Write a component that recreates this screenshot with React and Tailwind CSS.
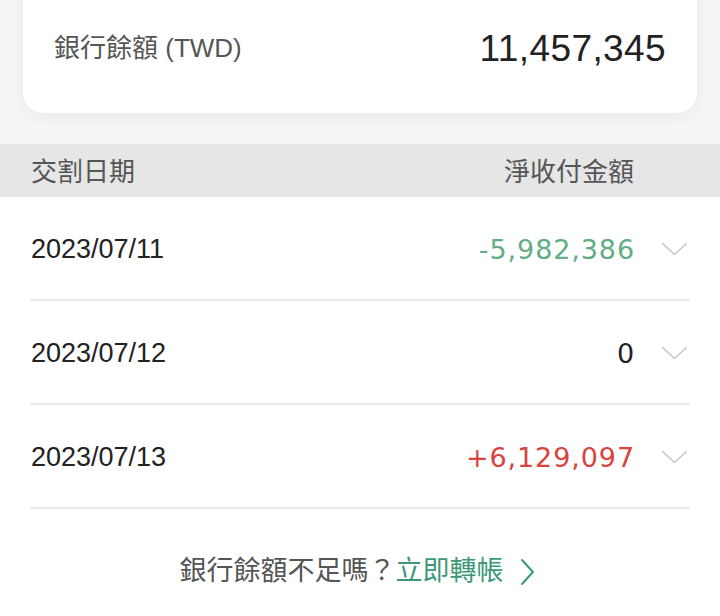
import React from "react";

const FONT = { fontFamily: '"Liberation Sans", "Noto Sans CJK TC", sans-serif' };
const AMT = { fontFamily: '"DejaVu Sans", "Liberation Sans", sans-serif' };

function ChevronDown() {
  return (
    <svg width="27" height="14" viewBox="0 0 27 14" fill="none">
      <polyline points="1.5,1.5 13.5,12.5 25.5,1.5" stroke="#c6c6c6" strokeWidth="1.6" strokeLinecap="round" strokeLinejoin="round" />
    </svg>
  );
}

const rows = [
  { date: "2023/07/11", amount: "-5,982,386", color: "text-[#63ad85]" },
  { date: "2023/07/12", amount: "0", color: "text-[#222222]" },
  { date: "2023/07/13", amount: "+6,129,097", color: "text-[#d8433c]" },
];

export default function App() {
  return (
    <div className="w-[720px] h-[616px] bg-white overflow-hidden flex flex-col" style={FONT}>
      <div className="bg-[#f5f5f5] pb-[31px]">
        <div className="mx-[23px] -mt-[24px] pt-[52px] pb-[45px] px-[31px] bg-white rounded-[20px] shadow-[0_4px_14px_rgba(0,0,0,0.05)] flex items-center justify-between h-[137px]">
          <span className="text-[26px] text-[#555555] leading-none">銀行餘額 (TWD)</span>
          <span className="text-[37px] text-[#222222] leading-none tracking-[0.4px]">11,457,345</span>
        </div>
      </div>
      <div className="h-[53px] bg-[#e6e6e6] flex items-center justify-between pl-[31px] pr-[86px] pt-[2px]">
        <span className="text-[26px] text-[#555555] leading-none">交割日期</span>
        <span className="text-[26px] text-[#555555] leading-none">淨收付金額</span>
      </div>
      <div className="flex flex-col">
        {rows.map((r) => (
          <div key={r.date} className="mx-[31px] h-[104px] border-b-2 border-[#e8e8e8] flex items-center justify-between pt-[2px]">
            <span className="text-[27px] text-[#222222] leading-none">{r.date}</span>
            <div className="flex items-center">
              <span className={`text-[27px] leading-none tracking-[0.9px] ${r.color}`} style={AMT}>{r.amount}</span>
              <span className="ml-[26px] mr-[1px] flex items-center">
                <ChevronDown />
              </span>
            </div>
          </div>
        ))}
      </div>
      <div className="flex-1 flex items-center justify-center pt-[18px] pr-[6px]">
        <span className="text-[27px] text-[#555555] leading-none">銀行餘額不足嗎？</span>
        <span className="text-[27px] text-[#3c9878] leading-none">立即轉帳</span>
        <svg className="ml-[16px]" width="15" height="28" viewBox="0 0 15 28" fill="none">
          <polyline points="2,2 13,14 2,26" stroke="#3c9878" strokeWidth="2" strokeLinecap="round" strokeLinejoin="round" />
        </svg>
      </div>
    </div>
  );
}
